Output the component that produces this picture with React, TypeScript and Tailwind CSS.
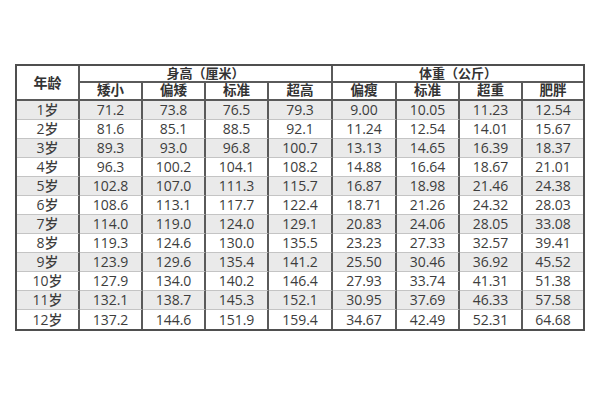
import React from "react";

const rows: string[][] = [
  ["1岁", "71.2", "73.8", "76.5", "79.3", "9.00", "10.05", "11.23", "12.54"],
  ["2岁", "81.6", "85.1", "88.5", "92.1", "11.24", "12.54", "14.01", "15.67"],
  ["3岁", "89.3", "93.0", "96.8", "100.7", "13.13", "14.65", "16.39", "18.37"],
  ["4岁", "96.3", "100.2", "104.1", "108.2", "14.88", "16.64", "18.67", "21.01"],
  ["5岁", "102.8", "107.0", "111.3", "115.7", "16.87", "18.98", "21.46", "24.38"],
  ["6岁", "108.6", "113.1", "117.7", "122.4", "18.71", "21.26", "24.32", "28.03"],
  ["7岁", "114.0", "119.0", "124.0", "129.1", "20.83", "24.06", "28.05", "33.08"],
  ["8岁", "119.3", "124.6", "130.0", "135.5", "23.23", "27.33", "32.57", "39.41"],
  ["9岁", "123.9", "129.6", "135.4", "141.2", "25.50", "30.46", "36.92", "45.52"],
  ["10岁", "127.9", "134.0", "140.2", "146.4", "27.93", "33.74", "41.31", "51.38"],
  ["11岁", "132.1", "138.7", "145.3", "152.1", "30.95", "37.69", "46.33", "57.58"],
  ["12岁", "137.2", "144.6", "151.9", "159.4", "34.67", "42.49", "52.31", "64.68"],
];

const sub = ["矮小", "偏矮", "标准", "超高", "偏瘦", "标准", "超重", "肥胖"];

export default function App() {
  return (
    <div
      className="w-[600px] h-[400px] bg-white pt-[64px] pl-[15px]"
      style={{ fontFamily: '"Open Sans", "Noto Sans CJK SC", sans-serif' }}
    >
      <div className="w-[570px] border-2 border-[#4f4f4f] grid grid-cols-[63px_63px_63px_63px_64px_64px_63px_63px_60px] grid-rows-[17px_18px_repeat(12,19px)] text-[#3d3d3d]">
        <div className="row-span-2 border-r-2 border-r-[#5a5a5a] border-b-2 border-b-[#5a5a5a] flex items-center justify-center text-[14px] font-bold leading-none text-[#333]">
          年龄
        </div>
        <div className="col-span-4 border-r-2 border-r-[#5a5a5a] border-b-2 border-b-[#5a5a5a] flex items-center justify-center text-[13px] font-bold leading-none text-[#333]">
          身高（厘米）
        </div>
        <div className="col-span-4 border-b-2 border-b-[#5a5a5a] flex items-center justify-center text-[13px] font-bold leading-none text-[#333]">
          体重（公斤）
        </div>
        {sub.map((s, i) => (
          <div
            key={i}
            className={`border-b-2 border-b-[#5a5a5a] flex items-center justify-center text-[13.5px] font-bold leading-none text-[#333] ${
              i < 7 ? "border-r-2 border-r-[#5a5a5a]" : ""
            }`}
          >
            {s}
          </div>
        ))}
        {rows.map((r, ri) =>
          r.map((c, ci) => (
            <div
              key={`${ri}-${ci}`}
              className={`flex items-center justify-center text-[14px] leading-none font-medium ${
                ri % 2 === 0 ? "bg-[#eaeaea]" : "bg-white"
              } ${ci < 8 ? "border-r-2 border-r-[#5a5a5a]" : ""} ${
                ri < 11 ? "border-b border-b-[#c4c4c4]" : ""
              }`}
            >
              {c}
            </div>
          ))
        )}
      </div>
    </div>
  );
}
